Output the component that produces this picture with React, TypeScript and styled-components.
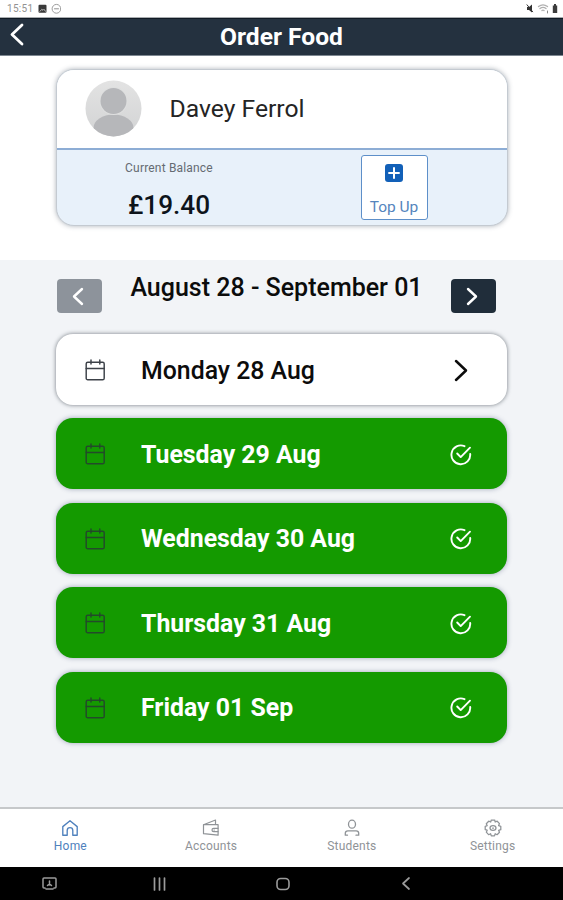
import React from "react";
import styled, { createGlobalStyle } from "styled-components";

const GlobalStyle = createGlobalStyle`
  * { box-sizing: border-box; }
  body { margin: 0; background: #fff; font-family: Roboto, "Liberation Sans", sans-serif; }
  svg { display: block; flex: none; fill: none; stroke: currentColor; stroke-linecap: round; stroke-linejoin: round; }
  button { font-family: inherit; padding: 0; border: 0; background: none; color: inherit; }
`;

const Screen = styled.div`
  width: 563px;
  height: 900px;
  display: flex;
  flex-direction: column;
  overflow: hidden;
`;

const StatusBar = styled.div`
  height: 18px;
  flex: none;
  display: flex;
  justify-content: space-between;
  padding: 0 4px 0 7px;
  color: #929292;
  font-size: 10px;
  line-height: 18px;
  letter-spacing: 0.3px;
  border-bottom: 1px solid #a9adb0;
`;

const StatusGroup = styled.div`
  display: flex;
  align-items: center;
  gap: 5px;
`;

const Header = styled.header`
  height: 38px;
  flex: none;
  display: grid;
  grid-template-columns: 60px 1fr 60px;
  align-items: center;
  background: #24313f;
  border-top: 1px solid #101a24;
  border-bottom: 1px solid #7d8791;
  color: #fff;
`;

const BackButton = styled.button`
  padding: 0 0 5px 10px;
  height: 34px;
`;

const Title = styled.h1`
  margin: 0;
  text-align: center;
  font-size: 24.6px;
  line-height: 36px;
  font-weight: 700;
`;

const AccountArea = styled.section`
  height: 204px;
  flex: none;
  padding: 13px 55.5px 0;
`;

const AccountCard = styled.div`
  height: 157px;
  border-radius: 18px;
  border: 1px solid #c4cad1;
  box-shadow: 0 0 5px rgba(60, 75, 90, 0.42);
  overflow: hidden;
  background: #e8f1fa;
`;

const Person = styled.div`
  height: 80px;
  display: flex;
  align-items: center;
  gap: 28px;
  padding: 0 0 1px 28px;
  background: #fff;
  border-bottom: 2px solid #8dadd5;
`;

const PersonName = styled.div`
  font-size: 24.7px;
  line-height: 30px;
  color: #242424;
`;

const BalanceRow = styled.div`
  display: flex;
  height: 75px;
`;

const Balance = styled.div`
  width: 225px;
  margin-right: 79px;
  text-align: center;
`;

const BalanceLabel = styled.div`
  margin-top: 10px;
  font-size: 12px;
  line-height: 16px;
  letter-spacing: 0.18px;
  color: #656b72;
`;

const Amount = styled.div`
  margin-top: 14px;
  font-size: 26.2px;
  line-height: 30px;
  font-weight: 500;
  color: #0d141b;
`;

const TopUp = styled.button`
  width: 67px;
  height: 65px;
  margin-top: 5px;
  display: flex;
  flex-direction: column;
  align-items: center;
  border: 1.5px solid #5d8fc9;
  border-radius: 3px;
  background: #fff;
  color: #5585bd;
  font-size: 15.5px;
  line-height: 18px;
  padding-top: 8px;
  gap: 16px;
`;

const WeekArea = styled.main`
  flex: 1;
  padding: 19px 56px 0;
  background: #f2f4f7;
`;

const WeekBar = styled.div`
  height: 55px;
  display: flex;
  justify-content: space-between;
  padding: 0 11px 0 1px;
`;

const WeekButton = styled.button<{ $muted?: boolean }>`
  width: 45px;
  height: 34px;
  display: grid;
  place-items: center;
  padding-right: 4px;
  border-radius: 4px;
  color: #fff;
  background: ${(p) => (p.$muted ? "#8d939b" : "#202d3a")};
`;

const WeekRange = styled.div`
  margin-top: -7px;
  font-size: 25px;
  line-height: 32px;
  font-weight: 500;
  color: #0c0c0c;
  white-space: nowrap;
`;

const DayList = styled.div`
  display: flex;
  flex-direction: column;
  gap: 13.4px;
`;

const DayRow = styled.button<{ $ordered?: boolean }>`
  width: 451px;
  height: 71px;
  display: grid;
  grid-template-columns: 56px 1fr 24px;
  align-items: center;
  padding: 2px 33px 0 29px;
  border-radius: 17px;
  text-align: left;
  font-size: 24.85px;
  line-height: 30px;
  font-weight: ${(p) => (p.$ordered ? 700 : 500)};
  color: ${(p) => (p.$ordered ? "#fff" : "#0c0c0c")};
  background: ${(p) => (p.$ordered ? "#149a00" : "#fff")};
  box-shadow: 0 0 ${(p) => (p.$ordered ? "5px rgba(45, 60, 100, 0.42)" : "4px rgba(30, 40, 50, 0.6)")};
`;

const CalendarSlot = styled.span<{ $ordered?: boolean }>`
  color: ${(p) => (p.$ordered ? "#234a2a" : "#3c4148")};
`;

const ChevronSlot = styled.span`
  padding-left: 4px;
`;

const TabBar = styled.nav`
  height: 60px;
  flex: none;
  display: grid;
  grid-template-columns: repeat(4, 1fr);
  border-top: 2px solid #c6c8ca;
  background: #fff;
`;

const Tab = styled.button<{ $active?: boolean }>`
  display: flex;
  flex-direction: column;
  align-items: center;
  padding-top: 10px;
  gap: 1.5px;
  font-size: 12px;
  line-height: 15px;
  letter-spacing: 0.2px;
  color: ${(p) => (p.$active ? "#4f81bd" : "#8f9397")};
`;

const SystemBar = styled.div`
  height: 33px;
  flex: none;
  display: flex;
  align-items: center;
  padding-left: 42px;
  background: #000;
  color: #9b9b9b;
`;

const SystemKey = styled.div<{ $width: number }>`
  width: ${(p) => p.$width}px;
`;

const Chevron = ({ right = false, w = 10, h = 20, stroke = 2.5 }) => (
  <svg width={w + 4} height={h + 4} viewBox={`-2 -2 ${w + 4} ${h + 4}`} strokeWidth={stroke}>
    <path d={right ? `M0 0L${w} ${h / 2}L0 ${h}` : `M${w} 0L0 ${h / 2}L${w} ${h}`} />
  </svg>
);

const Avatar = () => (
  <svg width="57" height="57" viewBox="0 0 57 57" stroke="none">
    <defs>
      <clipPath id="avatar-disc"><circle cx="28.5" cy="28.5" r="28" /></clipPath>
      <linearGradient id="avatar-fill" x1="0" y1="0" x2="0" y2="1">
        <stop stopColor="#e3e3e3" /><stop offset="1" stopColor="#d2d3d4" />
      </linearGradient>
    </defs>
    <g clipPath="url(#avatar-disc)" stroke="none">
      <rect width="57" height="57" fill="url(#avatar-fill)" />
      <ellipse cx="28.5" cy="48" rx="20" ry="13.5" fill="#b6b7ba" />
      <circle cx="28.5" cy="21" r="14" fill="#dedfdf" />
      <circle cx="28.5" cy="21" r="13" fill="#b6b7ba" />
    </g>
  </svg>
);

const Plus = () => (
  <svg width="18" height="18" viewBox="0 0 18 18" strokeWidth="2">
    <rect width="18" height="18" rx="3" fill="#1260b8" stroke="none" />
    <path d="M3.3 9h11.4M9 3.3v11.4" stroke="#fff" strokeLinecap="butt" />
  </svg>
);

const Calendar = () => (
  <svg width="21" height="23" viewBox="0 0 21 23" strokeWidth="1.45">
    <rect x="1.2" y="3.2" width="18" height="17.6" rx="1.6" />
    <path d="M1.2 9.4h18M6 1v4M14.8 1v4" />
  </svg>
);

const Check = () => (
  <svg width="22" height="22" viewBox="0 0 22 22" strokeWidth="1.9">
    <path d="M14.5 2.2A9.4 9.4 0 1 0 20.2 10" />
    <path d="M7.2 9.5l3.5 3.6L20 3.7" />
  </svg>
);

const HomeIcon = () => (
  <svg width="18" height="18" viewBox="0 0 18 18" strokeWidth="1.35">
    <path d="M1.8 7.6L9 1.8l7.2 5.8v8.6h-4.4v-4.8a2.8 2.8 0 0 0-5.6 0v4.8H1.8Z" />
  </svg>
);

const WalletIcon = () => (
  <svg width="18" height="18" viewBox="0 0 18 18" strokeWidth="1.2">
    <path d="M1.5 5.7L13.5 1v4M1.5 5.7h14.6v10.5l-14.6-1.5Z" />
    <path d="M16 9.3h-4.3a1.7 1.7 0 0 0 0 3.4H16M12 11h.4" />
  </svg>
);

const StudentIcon = () => (
  <svg width="18" height="18" viewBox="0 0 18 18" strokeWidth="1.3">
    <ellipse cx="9" cy="5.2" rx="3.5" ry="4" />
    <path d="M2.3 16.2v-2c0-1.6 1-2.4 2.6-2.4h8.2c1.6 0 2.6.8 2.6 2.4v2H13M2.3 16.2H4.5" />
  </svg>
);

const GearIcon = () => (
  <svg width="18" height="18" viewBox="0 0 18 18" strokeWidth="1.25">
    <path d="M7.3 1h3.4l.5 2 2-.8 2.3 2.4-.9 2 2.2.7v3.4l-2.2.6.9 2-2.4 2.4-1.9-1-.7 2.2H7.3l-.7-2.2-2 1-2.3-2.5.9-2-2-.6V7.3l2-.6-.9-2 2.4-2.5 2 .8Z" />
    <ellipse cx="9" cy="9" rx="3" ry="2.4" /><path d="M8.5 9h1" />
  </svg>
);

const StatusIcons = () => (
  <svg width="23" height="12" viewBox="0 0 23 12">
    <rect x=".5" y="1.8" width="8" height="8" rx="1" fill="#3a3a3a" stroke="none" />
    <path d="M2 8.3l1.8-2 1.2 1 1-1 1.5 2" stroke="#ddd" strokeWidth=".8" />
    <circle cx="18.5" cy="5.8" r="4.4" strokeWidth=".9" />
    <path d="M16.5 5.8h4" strokeWidth="1" />
  </svg>
);

const RadioIcons = () => (
  <svg width="34" height="12" viewBox="0 0 34 12" strokeWidth="1">
    <path d="M2 4h2l3-2.5v8L4 7H2Z" fill="#333" stroke="none" />
    <path d="M2 1.8l5.7 7" stroke="#333" />
    <path d="M13.5 3.6q4.5-3.5 9 0M15 5.5q3-2.3 6 0M17 7.5q1-.8 2 0" stroke="#b0b0b0" strokeWidth="1.3" />
    <path d="M22.5 8v2" stroke="#888" />
    <path d="M27.8 2.5H29V1h2v1.5h1.2V10h-4.4Z" fill="#3c3c3c" stroke="none" />
  </svg>
);

const days = [
  { label: "Monday 28 Aug", ordered: false },
  { label: "Tuesday 29 Aug", ordered: true },
  { label: "Wednesday 30 Aug", ordered: true },
  { label: "Thursday 31 Aug", ordered: true },
  { label: "Friday 01 Sep", ordered: true },
];

const tabs = [
  { label: "Home", icon: <HomeIcon />, active: true },
  { label: "Accounts", icon: <WalletIcon /> },
  { label: "Students", icon: <StudentIcon /> },
  { label: "Settings", icon: <GearIcon /> },
];

export default function App() {
  return (
    <Screen>
      <GlobalStyle />
      <StatusBar>
        <StatusGroup><span>15:51</span><StatusIcons /></StatusGroup>
        <StatusGroup><RadioIcons /></StatusGroup>
      </StatusBar>
      <Header>
        <BackButton aria-label="Back"><Chevron w={10} h={19} stroke={2.8} /></BackButton>
        <Title>Order Food</Title>
      </Header>
      <AccountArea>
        <AccountCard>
          <Person><Avatar /><PersonName>Davey Ferrol</PersonName></Person>
          <BalanceRow>
            <Balance>
              <BalanceLabel>Current Balance</BalanceLabel>
              <Amount>£19.40</Amount>
            </Balance>
            <TopUp><Plus />Top Up</TopUp>
          </BalanceRow>
        </AccountCard>
      </AccountArea>
      <WeekArea>
        <WeekBar>
          <WeekButton $muted aria-label="Previous week"><Chevron w={8} h={15} stroke={2.4} /></WeekButton>
          <WeekRange>August 28 - September 01</WeekRange>
          <WeekButton aria-label="Next week"><Chevron right w={8} h={15} stroke={2.4} /></WeekButton>
        </WeekBar>
        <DayList>
          {days.map(({ label, ordered }) => (
            <DayRow key={label} $ordered={ordered}>
              <CalendarSlot $ordered={ordered}><Calendar /></CalendarSlot>
              <span>{label}</span>
              {ordered ? <Check /> : <ChevronSlot><Chevron right w={10} h={19} stroke={2.5} /></ChevronSlot>}
            </DayRow>
          ))}
        </DayList>
      </WeekArea>
      <TabBar>
        {tabs.map(({ label, icon, active }) => (
          <Tab key={label} $active={active}>{icon}{label}</Tab>
        ))}
      </TabBar>
      <SystemBar>
        <SystemKey $width={111}>
          <svg width="16" height="14" viewBox="0 0 16 14" strokeWidth="1.5">
            <path d="M3 11H2Q1 11 1 10V2Q1 1 2 1h11q1 0 1 1v8q0 1-1 1h-1M4 12h7M7.5 4v4M5.5 8.5q2-2 4 0" />
          </svg>
        </SystemKey>
        <SystemKey $width={123}>
          <svg width="14" height="14" viewBox="0 0 14 14" strokeWidth="1.7" strokeLinecap="butt"><path d="M1.5 1v12M6.5 1v12M11.5 1v12" /></svg>
        </SystemKey>
        <SystemKey $width={125}>
          <svg width="14" height="14" viewBox="0 0 14 14" strokeWidth="1.6"><rect x="1" y="1.5" width="12" height="11" rx="3.7" /></svg>
        </SystemKey>
        <Chevron w={6} h={11} stroke={1.7} />
      </SystemBar>
    </Screen>
  );
}
